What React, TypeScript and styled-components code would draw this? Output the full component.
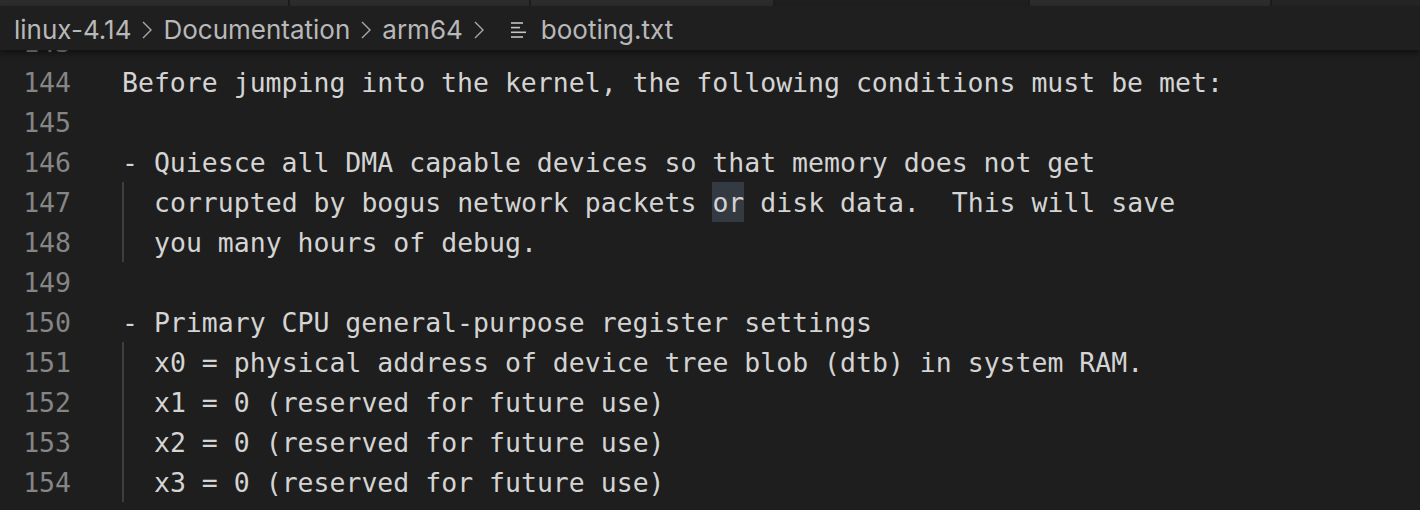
import styled, { createGlobalStyle } from 'styled-components';

const GlobalStyle = createGlobalStyle`
  html, body {
    margin: 0;
    padding: 0;
    background: #1e1e1e;
  }
  body {
    width: 1420px;
    height: 510px;
    overflow: hidden;
  }
`;

const Window = styled.div`
  width: 1420px;
  height: 510px;
  display: flex;
  flex-direction: column;
  background: #1e1e1e;
  overflow: hidden;
  position: relative;
`;

const TabStrip = styled.div`
  display: flex;
  height: 6px;
  background: #252525;
  flex-shrink: 0;
`;

const Tab = styled.div<{ $w: number; $active?: boolean }>`
  width: ${(p) => p.$w}px;
  height: 100%;
  background: ${(p) => (p.$active ? '#1f1f1f' : '#2c2c2c')};
  border-right: 2px solid #1c1c1c;
`;

const Breadcrumbs = styled.div`
  height: 44px;
  flex-shrink: 0;
  display: flex;
  align-items: center;
  padding: 3px 0 0 14px;
  box-sizing: border-box;
  background: #1f1f1f;
  font-family: Inter, 'Liberation Sans', sans-serif;
  font-size: 26px;
  color: #b8b8b8;
  position: relative;
  z-index: 2;
  box-shadow: 0 3px 6px rgba(0, 0, 0, 0.45);
`;

const Crumb = styled.span`
  white-space: nowrap;
`;

const Chevron = styled.svg`
  width: 12px;
  height: 20px;
  margin: 0 10px 0 10px;
  flex-shrink: 0;
`;

const FileIcon = styled.svg`
  width: 16px;
  height: 18px;
  margin: 0 14px 0 16px;
  flex-shrink: 0;
`;

const Viewport = styled.div`
  flex: 1;
  overflow: hidden;
  position: relative;
  z-index: 1;
`;

const Lines = styled.div`
  margin-top: -28px;
  font-family: 'DejaVu Sans Mono', 'Liberation Mono', monospace;
  font-size: 26.5px;
`;

const Row = styled.div`
  display: flex;
  height: 40px;
  line-height: 42px;
`;

const LineNo = styled.div`
  width: 71px;
  text-align: right;
  color: #858585;
  flex-shrink: 0;
`;

const Code = styled.div`
  margin-left: 51px;
  color: #d4d4d4;
  white-space: pre;
  height: 40px;
  display: flex;
  align-items: stretch;
`;

const Guide = styled.span`
  width: 32px;
  border-left: 2px solid #3e3e3e;
  box-sizing: border-box;
  flex-shrink: 0;
`;

const Mark = styled.span`
  background: #343a42;
`;

type Line = { n: number; text: string; guide?: boolean };

const lines: Line[] = [
  { n: 143, text: '' },
  { n: 144, text: 'Before jumping into the kernel, the following conditions must be met:' },
  { n: 145, text: '' },
  { n: 146, text: '- Quiesce all DMA capable devices so that memory does not get' },
  { n: 147, text: 'corrupted by bogus network packets or disk data.  This will save', guide: true },
  { n: 148, text: 'you many hours of debug.', guide: true },
  { n: 149, text: '' },
  { n: 150, text: '- Primary CPU general-purpose register settings' },
  { n: 151, text: 'x0 = physical address of device tree blob (dtb) in system RAM.', guide: true },
  { n: 152, text: 'x1 = 0 (reserved for future use)', guide: true },
  { n: 153, text: 'x2 = 0 (reserved for future use)', guide: true },
  { n: 154, text: 'x3 = 0 (reserved for future use)', guide: true },
];

function renderText(line: Line) {
  if (line.n === 147) {
    const i = line.text.indexOf(' or ') + 1;
    return (
      <>
        {line.text.slice(0, i)}
        <Mark>or</Mark>
        {line.text.slice(i + 2)}
      </>
    );
  }
  return line.text;
}

function ChevronIcon() {
  return (
    <Chevron viewBox="0 0 12 20">
      <polyline points="2,2 10,10 2,18" fill="none" stroke="#a8a8a8" strokeWidth="1.4" />
    </Chevron>
  );
}

export default function App() {
  const crumbs = ['linux-4.14', 'Documentation', 'arm64'];
  return (
    <>
      <GlobalStyle />
      <Window>
        <TabStrip>
          <Tab $w={288} />
          <Tab $w={239} />
          <Tab $w={242} />
          <Tab $w={253} $active />
          <Tab $w={240} />
        </TabStrip>
        <Breadcrumbs>
          {crumbs.map((c) => (
            <span key={c} style={{ display: 'contents' }}>
              <Crumb>{c}</Crumb>
              <ChevronIcon />
            </span>
          ))}
          <FileIcon viewBox="0 0 16 18">
            <g stroke="#c4c4c4" strokeWidth="1.6">
              <line x1="0" y1="2" x2="12" y2="2" />
              <line x1="0" y1="6.6" x2="9" y2="6.6" />
              <line x1="0" y1="11.3" x2="15" y2="11.3" />
              <line x1="0" y1="16" x2="12" y2="16" />
            </g>
          </FileIcon>
          <Crumb>booting.txt</Crumb>
        </Breadcrumbs>
        <Viewport>
          <Lines>
            {lines.map((l) => (
              <Row key={l.n}>
                <LineNo>{l.n}</LineNo>
                <Code>
                  {l.guide && <Guide />}
                  {renderText(l)}
                </Code>
              </Row>
            ))}
          </Lines>
        </Viewport>
      </Window>
    </>
  );
}
